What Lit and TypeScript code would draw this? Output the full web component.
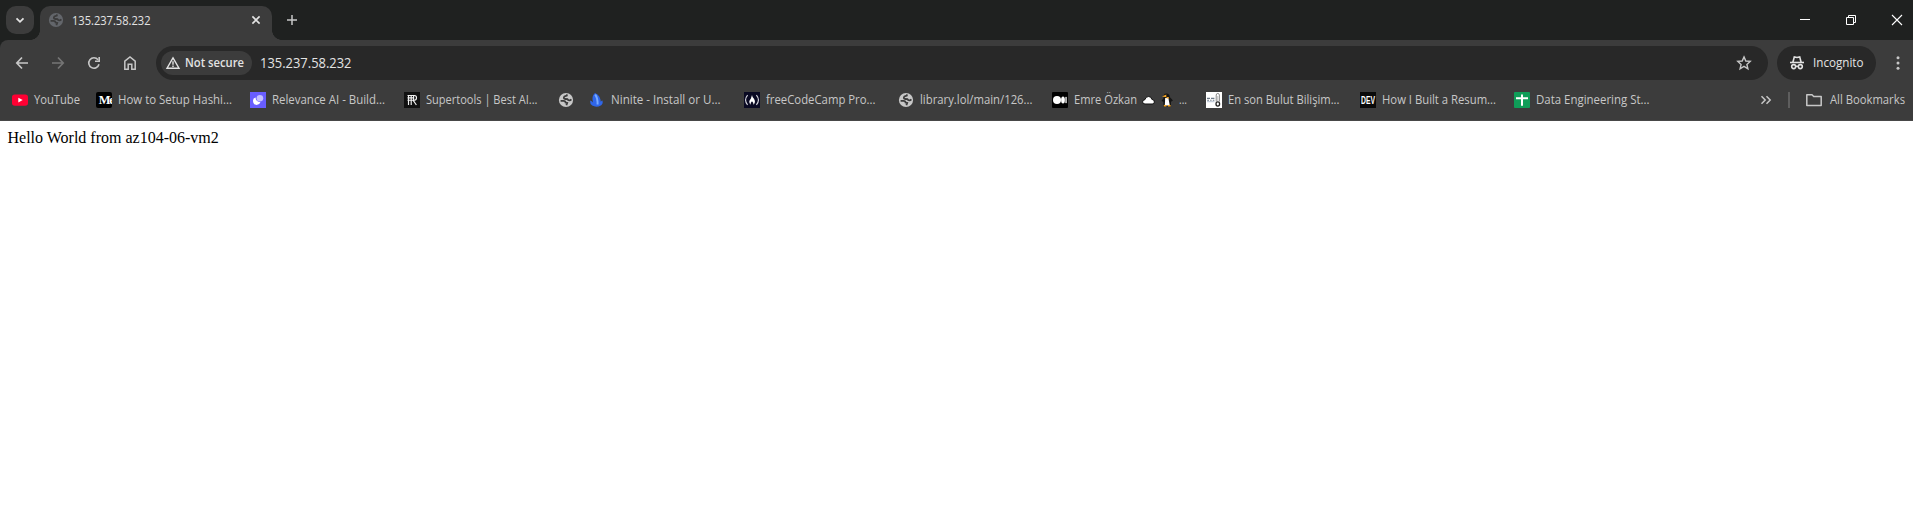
import { LitElement, html, css, svg } from "lit";
import { customElement } from "lit/decorators.js";

/* Single-line label set to an exact advance width. */
const label = (text: string, width: number, size = 12, cls = "", baseline = 14) => html`<svg
  class="label ${cls}" width=${width} height="20" viewBox="0 0 ${width} 20">
  <text x="0" y=${baseline} font-size=${size} textLength=${width} lengthAdjust="spacingAndGlyphs">${text}</text>
</svg>`;

const icon = (body: unknown, cls = "", size = 16) => html`<svg
  class="icon ${cls}" width=${size} height=${size} viewBox="0 0 ${size} ${size}">${body}</svg>`;

const globe = svg`<circle cx="8" cy="8" r="7.1" fill="currentColor"/>
  <path d="M9 2.4 L8.8 3.6 L6.4 4.4 Q5 6.4 7 7 L9.4 7.2 Q10.2 9 12.4 8.2 L13.4 7.4 M2.6 8.8 H5.4 Q7.6 9 7.6 10.6 L9.2 11 L8.4 13.2" fill="none" stroke="#3c3c3c" stroke-width="1.8"/>`;

const art: Record<string, unknown> = {
  youtube: svg`<rect y="2.4" width="16" height="11.4" rx="2.8" fill="#ff0033"/><path d="M6.3 5.7 L10.7 8.1 L6.3 10.5Z" fill="#fff"/>`,
  medium: svg`<rect width="16" height="16" rx="2" fill="#000"/><text x="2.8" y="12.4" font-family="Liberation Serif, serif" font-weight="700" font-size="12.5" textLength="16" fill="#fff">Me</text>`,
  relevance: svg`<rect width="16" height="16" fill="#685dff"/><circle cx="9.9" cy="6.2" r="3.3" fill="#c4bfff"/><path d="M3 8.4 Q3 5.8 5.6 5.4 Q5.6 9.6 10.5 10.3 Q9.4 13 6.6 13 Q3 12.5 3 8.4Z" fill="#fff"/>`,
  supertools: svg`<rect width="16" height="16" fill="#111"/><path d="M3.5 3.5 H10.5 Q12.5 3.5 12.5 5.8 Q12.5 8.2 10.5 8.2 H3.5 M4.5 3.5 V13 M7.2 3.5 V13 M9.6 3.5 V8 M3.5 5.8 H10 M9.2 8.4 L12.4 13" fill="none" stroke="#f2f2f2" stroke-width="1.15"/>`,
  globe,
  ninite: svg`<path d="M1 8.4 Q3 9 4 10.4 C2.8 6 3.6 3 6 1 C9.8 2.6 11.6 6 11.8 9.8 Q12.6 8.6 13.4 8.6 Q14.4 11.6 12.2 13.2 Q7.5 16 3.2 13.6 Q1 12 1 8.4Z" fill="#2f66ea"/><path d="M6.2 2.6 Q8.8 6 8.6 12.5" fill="none" stroke="#78aaff" stroke-width="2"/>`,
  fcc: svg`<rect width="16" height="16" fill="#0a0a23"/><path d="M3.6 3.2 Q-.5 8 3.6 12.8 M12.4 3.2 Q16.5 8 12.4 12.8" fill="none" stroke="#d8d8e0" stroke-width="1.1"/><path d="M8 3 Q8.2 5.2 10 6.8 Q12.2 10.5 9.3 12.7 Q10 10.8 8 9.2 Q6 10.8 6.7 12.7 Q3.8 10 6.8 6.8Z" fill="#fff"/>`,
  dots: svg`<rect width="16" height="16" rx="1" fill="#000"/><circle cx="5" cy="8" r="4" fill="#fff"/><ellipse cx="11" cy="8" rx="1.9" ry="3.5" fill="#fff"/><rect x="13.4" y="4.9" width="1.3" height="6.2" fill="#fff"/>`,
  cloudnews: svg`<rect width="16" height="16" fill="#fff"/><path d="M1 6.4 H4 M5 6.4 H8.4 M1.2 8.2 H3 M4.2 8.2 H5.6 M6.8 8.2 H8.4" stroke="#6d7a88" stroke-width="1.1"/><path d="M1 9.7 H8.5" stroke="#b9c6d6" stroke-width="1"/><path d="M10.2 9.5 V3 Q10.4 1.4 11.8 1.4 Q13.2 1.4 13.4 3 V9.5" fill="none" stroke="#8a8a8a" stroke-width="1"/><path d="M11.8 4 V9" stroke="#bbb"/><ellipse cx="11.8" cy="12" rx="1.8" ry="2.1" fill="none" stroke="#222" stroke-width="1.3"/>`,
  dev: svg`<rect width="16" height="16" fill="#0a0a0a"/><text x="1" y="11.6" font-family="Liberation Sans, sans-serif" font-weight="700" font-size="10" textLength="14" lengthAdjust="spacingAndGlyphs" fill="#fff">DEV</text>`,
  sheets: svg`<rect width="16" height="16" rx="1" fill="#0f9d58"/><path d="M2 6.2 H14 M8 2.5 V13.7" stroke="#fff" stroke-width="2"/>`,
};

interface Bookmark { icon: string; text: string; slot: number; width: number }

const bookmarks: Bookmark[] = [
  { icon: "youtube", text: "YouTube", slot: 84, width: 46 },
  { icon: "medium", text: "How to Setup Hashi...", slot: 154, width: 114 },
  { icon: "relevance", text: "Relevance AI - Build...", slot: 154, width: 113 },
  { icon: "supertools", text: "Supertools | Best AI...", slot: 154, width: 111.5 },
  { icon: "globe", text: "", slot: 31, width: 0 },
  { icon: "ninite", text: "Ninite - Install or U...", slot: 155, width: 109.5 },
  { icon: "fcc", text: "freeCodeCamp Pro...", slot: 154, width: 109.5 },
  { icon: "globe", text: "library.lol/main/126...", slot: 154, width: 112.5 },
  { icon: "dots", text: "Emre Özkan", slot: 154, width: 63 },
  { icon: "cloudnews", text: "En son Bulut Bilişim...", slot: 154, width: 111.5 },
  { icon: "dev", text: "How I Built a Resum...", slot: 154, width: 114 },
  { icon: "sheets", text: "Data Engineering St...", slot: 154, width: 113.5 },
];

const emoji = html`<svg class="emoji" width="31" height="16" viewBox="0 0 31 16">
  <path d="M3 12 Q.6 12 .6 9.9 Q.6 7.9 2.9 7.7 Q3.6 4.4 6.7 4.5 Q9.4 4.7 9.8 7.3 Q12.4 7.6 12.4 10 Q12.4 12 10.2 12Z" fill="#fff" stroke="#111" stroke-width="1"/>
  <path d="M21.6 4 Q22 1.4 24.6 1.6 Q27.6 2 27.8 5 L31 8.5 L29 9.8 V14.6 H21.4 V9.8 L19.4 9 L21.6 6Z" fill="#161616"/>
  <path d="M23.2 6 H26.4 L27.8 13.4 H22.8Z" fill="#fff"/><path d="M20 4.4 L24.3 2.6 V5.2Z M24.6 5 H26.8 V6.6 H24.6Z M21.8 13 H24.4 V14.6 H21.8Z M26 13 H28.6 V14.6 H26Z" fill="#f6a624"/>
</svg>`;

@customElement("app-root")
export class AppRoot extends LitElement {
  static styles = css`
    :host { display: block; height: 506px; background: #fff; overflow: hidden; font-family: "Open Sans", "Noto Sans", sans-serif; color: #c7c7c7; }
    svg { display: block; flex: none; }
    .label { overflow: visible; fill: currentColor; }
    .semi { font-weight: 600; }
    .strip { height: 40px; background: #1f2120; display: flex; align-items: flex-start; padding: 6px 0 0 6px; box-sizing: border-box; }
    .search { width: 28px; height: 28px; border-radius: 10px; background: #3c3c3c; color: #e3e3e3; display: grid; place-items: center; }
    .flare { width: 10px; height: 10px; align-self: flex-end; }
    .flare.left { margin-left: -4px; background: radial-gradient(circle at 0 0, transparent 9.6px, #3c3c3c 10.2px); }
    .flare.right { background: radial-gradient(circle at 100% 0, transparent 9.6px, #3c3c3c 10.2px); }
    .tab { width: 232px; height: 34px; box-sizing: border-box; padding: 0 8px 6px; border-radius: 10px 10px 0 0; background: #3c3c3c; display: flex; align-items: center; color: #e3e3e3; }
    .tab .fav { color: #63666b; margin-right: 8px; }
    .tab .close { margin-left: auto; }
    .new { margin: 6px 0 0 2px; }
    .controls { margin: 6px 8px 0 auto; display: flex; gap: 30px; color: #fff; }
    .top { background: #1f2120; }
    .toolbar { height: 46px; background: #3c3c3c; border-top-left-radius: 8px; display: flex; align-items: center; padding: 0 7px 0 14px; box-sizing: border-box; }
    .nav { display: flex; gap: 20px; width: 142px; color: #c7c7c7; }
    .off { color: #757575; }
    .omnibox { flex: none; width: 1612px; height: 34px; border-radius: 17px; background: #282828; display: flex; align-items: center; padding: 0 16px 0 5px; box-sizing: border-box; color: #e3e3e3; }
    .chip { height: 24px; width: 91px; border-radius: 12px; background: #3c3c3c; display: flex; align-items: center; gap: 4px; padding-left: 4px; box-sizing: border-box; margin-right: 8px; }
    .star { margin-left: auto; color: #c7c7c7; }
    .incognito { flex: none; margin-left: 9px; width: 99px; height: 34px; border-radius: 17px; background: #282828; display: flex; align-items: center; gap: 8px; padding-left: 12px; box-sizing: border-box; color: #e3e3e3; }
    .menu { margin-left: 14px; }
    .bookmarks { height: 35px; box-sizing: border-box; background: #3c3c3c; border-bottom: 1px solid #474747; display: flex; align-items: center; padding: 0 8px 6px 12px; }
    .bookmark { flex: none; display: flex; align-items: center; gap: 5.5px; }
    .end { margin-left: auto; display: flex; align-items: center; }
    .rule { width: 2px; height: 16px; background: #5e5e5e; margin: 0 16px 0 14px; }
    .folder { margin-right: 8px; }
    .page { padding: 8px 7.5px; font: 16px/18px "Liberation Serif", "Times New Roman", serif; color: #000; }
  `;

  render() {
    return html`
      <div class="top">
        <div class="strip">
          <div class="search">${icon(svg`<path d="M4.5 6.3 L8 9.8 L11.5 6.3" fill="none" stroke="currentColor" stroke-width="1.8"/>`)}</div>
          <div class="flare left"></div>
          <div class="tab">
            ${icon(globe, "fav")}
            ${label("135.237.58.232", 78.5, 12.2, "", 14.6)}
            ${icon(svg`<path d="M4.4 4.4 L11.6 11.6 M11.6 4.4 L4.4 11.6" stroke="currentColor" stroke-width="1.6"/>`, "close")}
          </div>
          <div class="flare right"></div>
          ${icon(svg`<path d="M8 3 V13 M3 8 H13" stroke="currentColor" stroke-width="1.5"/>`, "new")}
          <div class="controls">
            ${icon(svg`<path d="M3 7.5 H13" stroke="currentColor"/>`)}
            ${icon(svg`<path d="M3.5 5.5 H10.5 V12.5 H3.5Z M5.5 5.5 V3.5 H12.5 V10.5 H10.5" fill="none" stroke="currentColor"/>`)}
            ${icon(svg`<path d="M3 3 L13 13 M13 3 L3 13" stroke="currentColor" stroke-width="1.1"/>`)}
          </div>
        </div>
        <div class="toolbar">
          <div class="nav">
            ${icon(svg`<path d="M14 8 H3 M8 2.5 L2.8 8 L8 13.5" fill="none" stroke="currentColor" stroke-width="1.7"/>`)}
            ${icon(svg`<path d="M2 8 H13 M8 2.5 L13.2 8 L8 13.5" fill="none" stroke="currentColor" stroke-width="1.7"/>`, "off")}
            ${icon(svg`<path d="M13 9.3 A5.2 5.2 0 1 1 12 4.7" fill="none" stroke="currentColor" stroke-width="1.6"/><path d="M14 2 V7 H9 V5.4 H12.4 V2Z" fill="currentColor"/>`)}
            ${icon(svg`<path d="M2.8 14.2 V6.2 L8 2 L13.2 6.2 V14.2 H9.8 V9.3 H6.2 V14.2Z" fill="none" stroke="currentColor" stroke-width="1.5"/>`)}
          </div>
          <div class="omnibox">
            <div class="chip">
              ${icon(svg`<path d="M8 2.8 L14 13.2 H2Z" fill="none" stroke="currentColor" stroke-width="1.4"/><path d="M8 6.2 V9.8 M8 10.6 V12" stroke="currentColor" stroke-width="1.4"/>`)}
              ${label("Not secure", 59, 12, "semi")}
            </div>
            ${label("135.237.58.232", 91.5, 14, "", 15)}
            ${icon(svg`<path d="M8 1.9 L9.8 6 L14.2 6.4 L10.9 9.4 L11.9 13.8 L8 11.4 L4.1 13.8 L5.1 9.4 L1.8 6.4 L6.2 6Z" fill="none" stroke="currentColor" stroke-width="1.4"/>`, "star")}
          </div>
          <div class="incognito">
            ${icon(svg`<path d="M1 7.5 H15" stroke="currentColor" stroke-width="1.6"/><path d="M3.9 7.2 L5.3 1.9 L8 2.5 L10.7 1.9 L12.1 7.2" fill="none" stroke="currentColor" stroke-width="1.6"/><circle cx="4.7" cy="11.6" r="2" fill="none" stroke="currentColor" stroke-width="1.6"/><circle cx="11.3" cy="11.6" r="2" fill="none" stroke="currentColor" stroke-width="1.6"/><path d="M6.5 11.3 H9.5" stroke="currentColor" stroke-width="1.3"/>`)}
            ${label("Incognito", 50.5, 12.2, "", 14.4)}
          </div>
          ${icon(svg`<circle cx="8" cy="2.8" r="1.5" fill="currentColor"/><circle cx="8" cy="8" r="1.5" fill="currentColor"/><circle cx="8" cy="13.2" r="1.5" fill="currentColor"/>`, "menu")}
        </div>
      </div>
      <div class="bookmarks">
        ${bookmarks.map((b) => html`<div class="bookmark" style="width:${b.slot}px">
          ${icon(art[b.icon])}
          ${b.text ? label(b.text, b.width) : ""}
          ${b.icon === "dots" ? html`${emoji}${label("...", 8, 12)}` : ""}
        </div>`)}
        <div class="end">
          ${icon(svg`<path d="M3.5 4.2 L7.2 8 L3.5 11.8 M8.5 4.2 L12.2 8 L8.5 11.8" fill="none" stroke="currentColor" stroke-width="1.5"/>`)}
          <div class="rule"></div>
          ${icon(svg`<path d="M.8 2.8 H6 L7.7 4.6 H15.2 V13.5 H.8Z" fill="none" stroke="currentColor" stroke-width="1.5" stroke-linejoin="round"/>`, "folder")}
          ${label("All Bookmarks", 75)}
        </div>
      </div>
      <main class="page">Hello World from az104-06-vm2</main>
    `;
  }
}
